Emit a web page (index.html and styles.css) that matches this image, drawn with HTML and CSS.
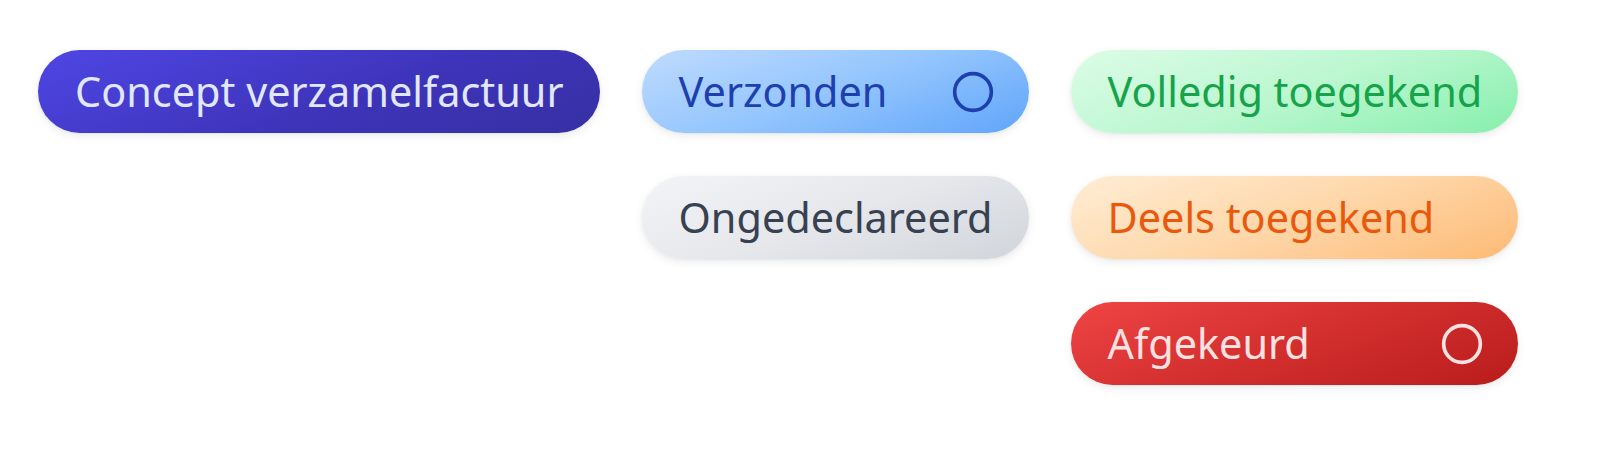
FILE: index.html
```html
<!DOCTYPE html>
<html lang="nl">
<head>
<meta charset="utf-8">
<title>Status badges</title>
<link rel="stylesheet" href="styles.css">
</head>
<body>
<main class="board">
  <div class="col">
    <span class="badge badge-concept">Concept verzamelfactuur</span>
  </div>
  <div class="col">
    <span class="badge badge-sent">Verzonden
      <svg class="icon" viewBox="0 0 24 24" aria-hidden="true"><circle cx="12" cy="12" r="10"/></svg>
    </span>
    <span class="badge badge-undeclared">Ongedeclareerd</span>
  </div>
  <div class="col">
    <span class="badge badge-full">Volledig toegekend</span>
    <span class="badge badge-partial">Deels toegekend</span>
    <span class="badge badge-rejected">Afgekeurd
      <svg class="icon" viewBox="0 0 24 24" aria-hidden="true"><circle cx="12" cy="12" r="10"/></svg>
    </span>
  </div>
</main>
</body>
</html>
```
FILE: styles.css
```css
html, body {
  margin: 0;
  padding: 0;
  background: #ffffff;
}

body {
  font-family: "Noto Sans", "Open Sans", "DejaVu Sans", sans-serif;
}

.board {
  display: flex;
  align-items: flex-start;
  gap: 42px;
  padding: 50px 38px;
}

.col {
  display: flex;
  flex-direction: column;
  align-items: stretch;
  gap: 43px;
}

.badge {
  box-sizing: border-box;
  height: 83px;
  display: flex;
  align-items: center;
  justify-content: space-between;
  gap: 40px;
  padding: 0 36px 0 37px;
  border-radius: 42px;
  font-size: 41.4px;
  line-height: 1;
  white-space: nowrap;
  box-shadow: 0 3px 10px rgba(15, 23, 42, 0.08), 0 1px 3px rgba(15, 23, 42, 0.05);
}

.icon {
  width: 44px;
  height: 44px;
  flex: none;
  fill: none;
  stroke: currentColor;
  stroke-width: 2;
  margin-right: -2px;
}

.badge-concept {
  background: linear-gradient(160deg, #4f46e5 0%, #3d33b8 60%, #3730a3 100%);
  color: #e0e7ff;
}

.badge-sent {
  background: linear-gradient(160deg, #bfdbfe 0%, #93c5fd 50%, #60a5fa 100%);
  color: #1e40af;
}

.badge-undeclared {
  background: linear-gradient(160deg, #f3f4f6 0%, #e5e7eb 50%, #d1d5db 100%);
  color: #374151;
}

.badge-full {
  background: linear-gradient(160deg, #dcfce7 0%, #bbf7d0 50%, #86efac 100%);
  color: #16a34a;
}

.badge-partial {
  background: linear-gradient(160deg, #ffedd5 0%, #fed7aa 50%, #fdba74 100%);
  color: #ea580c;
}

.badge-rejected {
  background: linear-gradient(160deg, #ef4444 0%, #d32f2f 50%, #b91c1c 100%);
  color: #fee2e2;
}
```
